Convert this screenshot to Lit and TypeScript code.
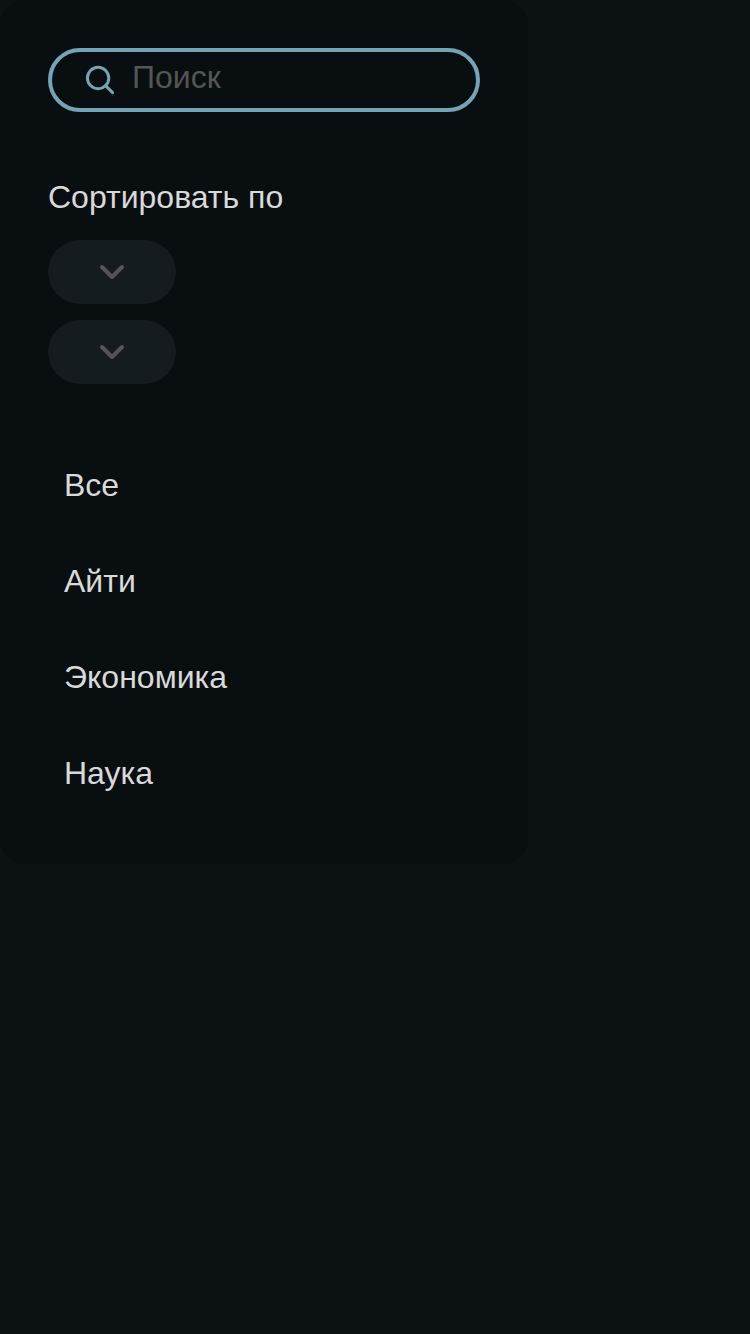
import { LitElement, html, css } from "lit";
import { customElement } from "lit/decorators.js";

@customElement("sort-chip")
class SortChip extends LitElement {
  static styles = css`
    :host { display: block; }
    .chip {
      display: flex;
      align-items: center;
      justify-content: center;
      width: 128px;
      height: 64px;
      padding: 0;
      border: none;
      border-radius: 32px;
      background: #141c1f;
    }
    svg { display: block; }
  `;
  render() {
    return html`<button class="chip" aria-label="Сортировка">
      <svg width="32" height="32" viewBox="0 0 32 32" fill="none">
        <path d="M6 11L16 21L26 11" stroke="#555555" stroke-width="4" stroke-linecap="round" stroke-linejoin="round" />
      </svg>
    </button>`;
  }
}

@customElement("app-root")
class AppRoot extends LitElement {
  static styles = css`
    :host {
      display: block;
      min-height: 1334px;
      background: #0c1214;
      font-family: "Liberation Sans", Arial, sans-serif;
      font-size: 32px;
      line-height: 36px;
      color: #d9d9d9;
    }
    .panel {
      box-sizing: border-box;
      width: 528px;
      height: 864px;
      padding: 48px;
      border-radius: 24px;
      background: #090e10;
    }
    .search {
      box-sizing: border-box;
      display: flex;
      height: 64px;
      padding: 12px 32px;
      gap: 16px;
      border: 4px solid #76a3b5;
      border-radius: 32px;
    }
    .search svg { flex: none; }
    .search input {
      flex: 1;
      min-width: 0;
      height: 36px;
      margin-top: -5px;
      padding: 0;
      border: none;
      outline: none;
      background: none;
      color: #d9d9d9;
      font: inherit;
    }
    .search input::placeholder { color: #555555; opacity: 1; }
    .sort { margin-top: 67px; }
    .chips {
      display: grid;
      gap: 16px;
      margin-top: 25px;
    }
    ul {
      margin: 53px 0 0;
      padding: 0 16px;
      list-style: none;
    }
    li { line-height: 96px; }
  `;
  private topics = ["Все", "Айти", "Экономика", "Наука"];
  render() {
    return html`<aside class="panel">
      <label class="search">
        <svg width="32" height="32" viewBox="0 0 32 32" fill="none" stroke="#76a3b5" stroke-width="3">
          <circle cx="14.1" cy="14" r="10.67" />
          <path d="M21.7 21.7L28.6 28.6" stroke-linecap="round" />
        </svg>
        <input type="text" placeholder="Поиск" />
      </label>
      <div class="sort">Сортировать по</div>
      <div class="chips"><sort-chip></sort-chip><sort-chip></sort-chip></div>
      <ul>${this.topics.map((t) => html`<li>${t}</li>`)}</ul>
    </aside>`;
  }
}
